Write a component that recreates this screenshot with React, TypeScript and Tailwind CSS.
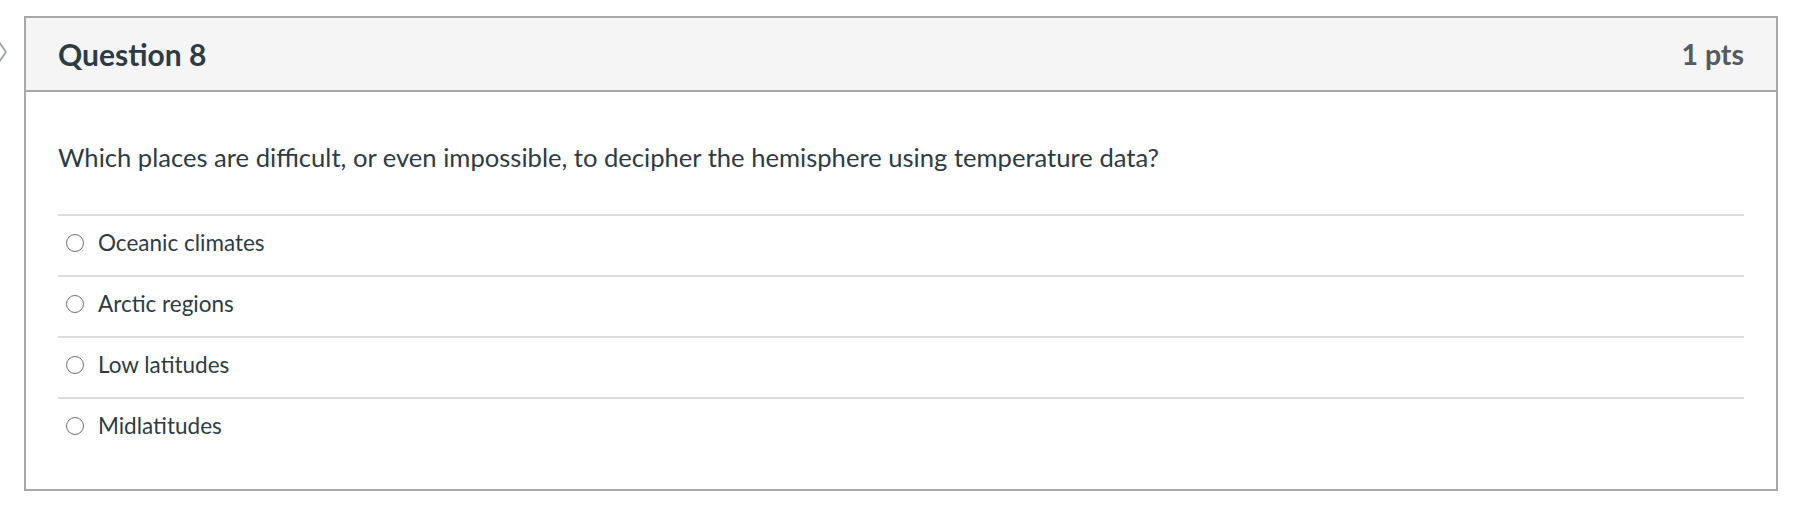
const options = ['Oceanic climates', 'Arctic regions', 'Low latitudes', 'Midlatitudes'];

function Radio() {
  return (
    <span className="block h-[18px] w-[18px] shrink-0 rounded-full border-[1.5px] border-[#6f6f6f] bg-white" />
  );
}

export default function App() {
  return (
    <div
      className="relative h-[508px] w-[1804px] bg-white text-[#2d3b45]"
      style={{ fontFamily: 'Lato, "Noto Sans", sans-serif' }}
    >
      {/* collapse chevron, cut off by the left edge */}
      <svg
        className="absolute left-[-4px] top-[40px]"
        width="14"
        height="24"
        viewBox="0 0 14 24"
        fill="none"
      >
        <path d="M3 2 L10 12 L3 22" stroke="#98a4ad" strokeWidth="1.8" strokeLinejoin="round" />
      </svg>

      <div className="ml-[24px] pt-[16px]">
        <div className="w-[1754px] border-2 border-[#a8a8a8]">
          <div className="flex h-[74px] items-center justify-between border-b-2 border-[#a8a8a8] bg-[#f5f5f5] px-[32px]">
            <h2 className="text-[30px] font-bold leading-none">Question 8</h2>
            <span className="text-[28.5px] font-bold leading-none text-[#555a5e]">1 pts</span>
          </div>

          <div className="px-[32px] pb-[31px] pt-[49px]">
            <p className="text-[25.6px] leading-[33px]">
              Which places are difficult, or even impossible, to decipher the hemisphere using temperature data?
            </p>
            <div className="mt-[40px]">
              {options.map((opt) => (
                <div key={opt} className="h-[61px] border-t-2 border-[#dcdcdc] pt-[12px]">
                  <label className="flex h-[30px] items-center gap-[14px] pl-[8px]">
                    <Radio />
                    <span className="text-[22.5px] leading-[30px]">{opt}</span>
                  </label>
                </div>
              ))}
            </div>
          </div>
        </div>
      </div>
    </div>
  );
}
